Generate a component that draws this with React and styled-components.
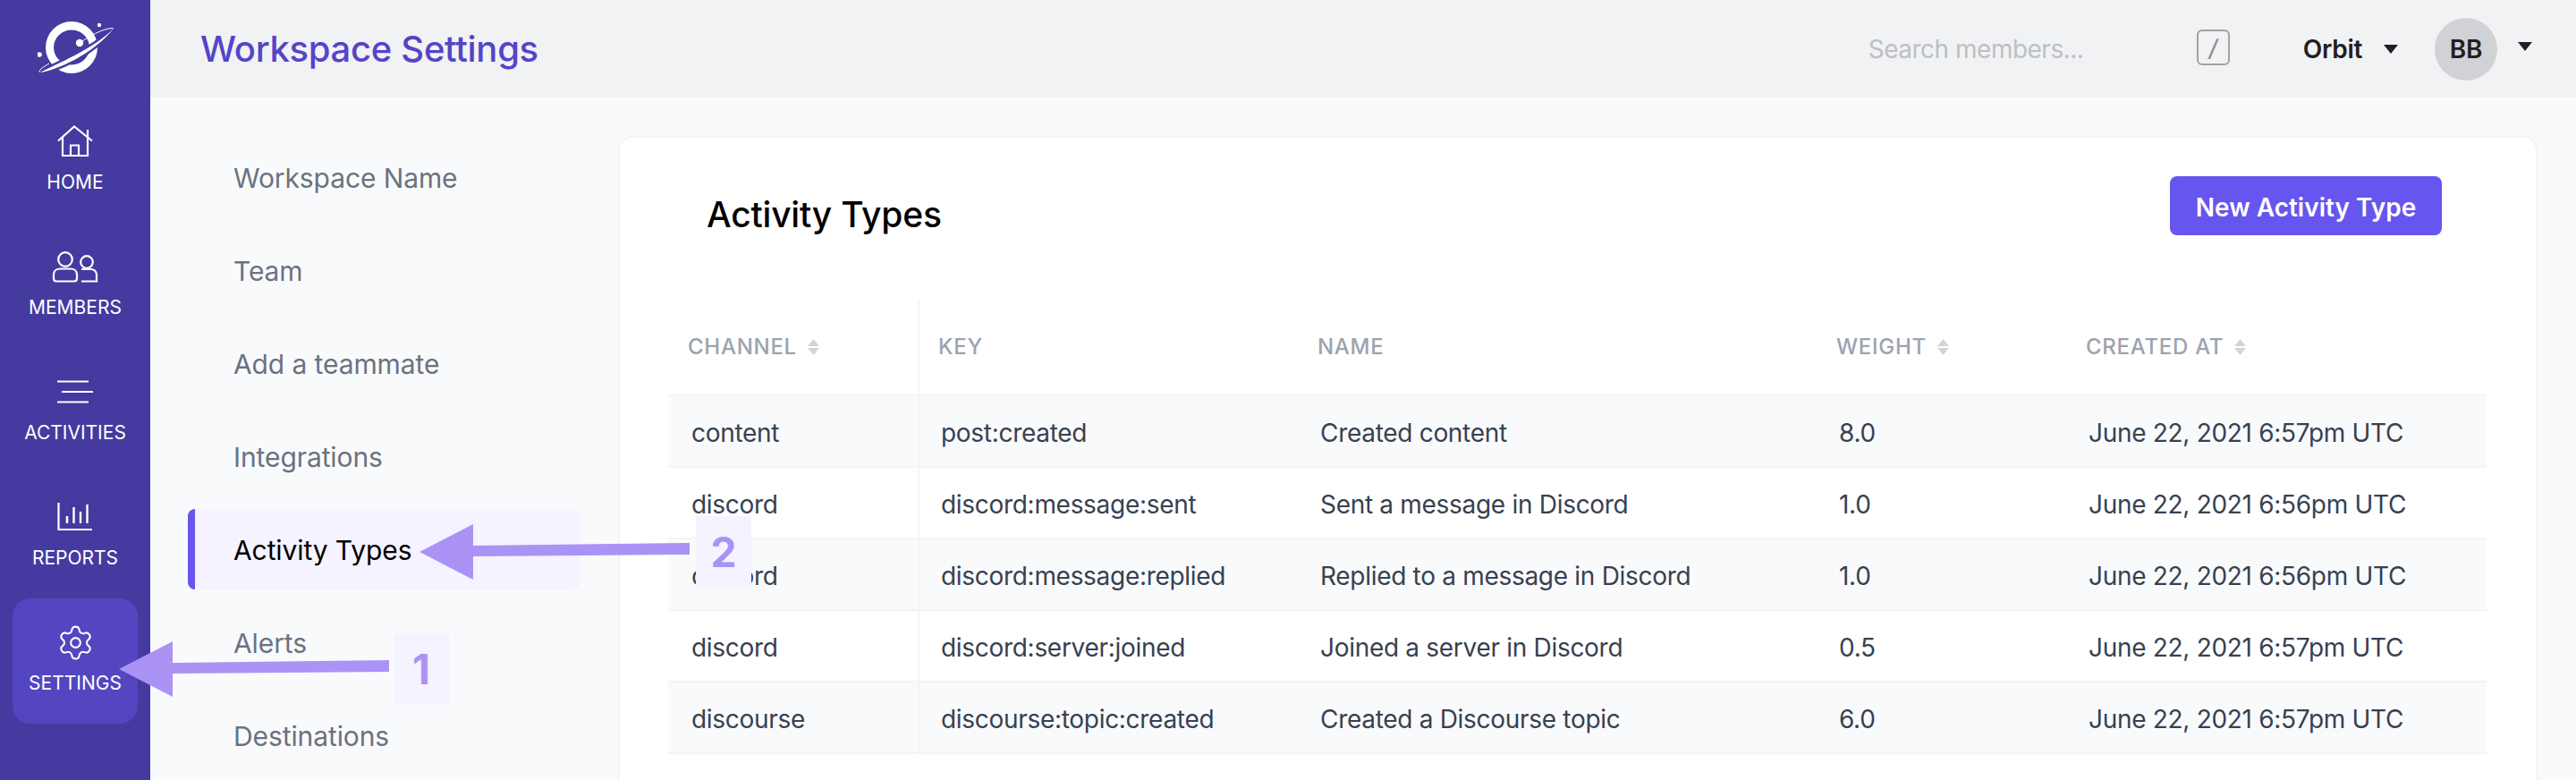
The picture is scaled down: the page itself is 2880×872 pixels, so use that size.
import React from "react";
import styled, { createGlobalStyle } from "styled-components";
import { Settings } from "lucide-react";

const rows = [
  ["content", "post:created", "Created content", "8.0", "June 22, 2021 6:57pm UTC"],
  ["discord", "discord:message:sent", "Sent a message in Discord", "1.0", "June 22, 2021 6:56pm UTC"],
  ["discord", "discord:message:replied", "Replied to a message in Discord", "1.0", "June 22, 2021 6:56pm UTC"],
  ["discord", "discord:server:joined", "Joined a server in Discord", "0.5", "June 22, 2021 6:57pm UTC"],
  ["discourse", "discourse:topic:created", "Created a Discourse topic", "6.0", "June 22, 2021 6:57pm UTC"],
];

const settingsLinks = [
  "Workspace Name",
  "Team",
  "Add a teammate",
  "Integrations",
  "Activity Types",
  "Alerts",
  "Destinations",
];

const HomeIcon = () => (
  <svg width="40" height="36" viewBox="0 0 40 36" fill="none" stroke="#fff" strokeWidth="2.2">
    <path d="M1 17.5 19 1.5 39 17.5" />
    <path d="M6 13v21h28V5" />
    <path d="M15 34V22.5h9V34" />
  </svg>
);

const MembersIcon = () => (
  <svg width="52" height="38" viewBox="0 0 52 38" fill="none" stroke="#fff" strokeWidth="2.2">
    <circle cx="15" cy="11" r="7.8" />
    <path d="M2 28c0-4 3-6.500 7-6.500h12c4 0 7 2.500 7 6.500v4c0 2-1 3.500-3 3.500H5c-2 0-3-1.500-3-3.500z" />
    <circle cx="39" cy="14" r="6.800" />
    <path d="M33 22h11c3 0 6 2.500 6 6v7.500H33" />
  </svg>
);

const ActivitiesIcon = () => (
  <svg width="40" height="26" viewBox="0 0 40 26" fill="none" stroke="#fff" strokeWidth="2.2">
    <path d="M0 1.500h35M5 13h35M0 24.500h35" />
  </svg>
);

const ReportsIcon = () => (
  <svg width="40" height="32" viewBox="0 0 40 32" fill="none" stroke="#fff" strokeWidth="2.2">
    <path d="M1.500 0v30H39" />
    <path d="M11 15v8M18.500 5v18M26 10v13M33.500 2v21" strokeWidth="2.400" />
  </svg>
);

const OrbitLogo = () => (
  <svg width="90" height="70" viewBox="0 0 90 70" fill="none">
    <path
      fillRule="evenodd"
      fill="#fff"
      d="M38 0a29 29 0 1 0 0 58 29 29 0 0 0 0-58zm0 9.500a20 19.500 0 1 1 0 39 20 19.500 0 0 1 0-39z"
    />
    <circle cx="47" cy="24" r="4.200" fill="#fff" />
    <circle cx="2" cy="37" r="2.800" fill="#fff" />
    <circle cx="69" cy="4" r="2.200" fill="#fff" />
    <path d="M3 57C20 55 62 37 85 8 62 31 22 47 3 57z" fill="#453a9f" stroke="#453a9f" strokeWidth="5" />
    <path d="M3 57C20 55 62 37 85 8 62 31 22 47 3 57z" fill="#fff" />
    <path d="M85 8C78 6 62 14 50 22" stroke="#fff" strokeWidth="1" />
    <path d="M3 57C0 55 6 51 13 47" stroke="#fff" strokeWidth="1" />
  </svg>
);

const SortIcon = () => (
  <SortSvg width="13" height="18" viewBox="0 0 13 18">
    <path d="M6.500 0 13 8H0z" />
    <path d="M6.500 18 13 10H0z" />
  </SortSvg>
);

const sideItems = [
  { label: "HOME", icon: <HomeIcon /> },
  { label: "MEMBERS", icon: <MembersIcon /> },
  { label: "ACTIVITIES", icon: <ActivitiesIcon /> },
  { label: "REPORTS", icon: <ReportsIcon /> },
  { label: "SETTINGS", icon: <Settings size={43} strokeWidth={1.15} color="#fff" />, active: true },
];

const Arrow = ({ left, top, length }) => (
  <ArrowSvg $left={left} $top={top} width={length} height="62" viewBox={`0 0 ${length} 62`}>
    <path d={`M0 31 60 0v24L${length} 21v13L60 36v26z`} />
  </ArrowSvg>
);

const App = () => {
  return (
    <Page>
      <GlobalStyle />
      <SideBar>
        <LogoWrapper>
          <OrbitLogo />
        </LogoWrapper>
        {sideItems.map((item) => (
          <SideItem key={item.label} $active={item.active}>
            <SideIcon>{item.icon}</SideIcon>
            <SideLabel>{item.label}</SideLabel>
          </SideItem>
        ))}
      </SideBar>
      <Main>
        <Header>
          <PageTitle>Workspace Settings</PageTitle>
          <SearchInput placeholder="Search members..." readOnly />
          <SlashKey>/</SlashKey>
          <WorkspaceName>Orbit</WorkspaceName>
          <Caret $gap="24px" />
          <Avatar>BB</Avatar>
          <Caret $gap="23px" $raise="5px" />
        </Header>
        <Content>
          <SettingsNav>
            {settingsLinks.map((link) => (
              <SettingsLink key={link} $active={link === "Activity Types"}>
                {link}
              </SettingsLink>
            ))}
          </SettingsNav>
          <Card>
            <CardHeader>
              <CardTitle>Activity Types</CardTitle>
              <PrimaryButton>New Activity Type</PrimaryButton>
            </CardHeader>
            <Table>
              <colgroup>
                <col width="281" />
                <col width="424" />
                <col width="580" />
                <col width="279" />
                <col width="469" />
              </colgroup>
              <thead>
                <tr>
                  <Th>CHANNEL <SortIcon /></Th>
                  <Th>KEY</Th>
                  <Th>NAME</Th>
                  <Th>WEIGHT <SortIcon /></Th>
                  <Th>CREATED AT <SortIcon /></Th>
                </tr>
              </thead>
              <tbody>
                {rows.map((row) => (
                  <Tr key={row[1]}>
                    {row.map((cell, i) => (
                      <Td key={i}>{cell}</Td>
                    ))}
                  </Tr>
                ))}
              </tbody>
            </Table>
          </Card>
        </Content>
      </Main>
      <Arrow left={133} top={717} length={302} />
      <StepBadge $left={440} $top={708}>1</StepBadge>
      <Arrow left={469} top={586} length={302} />
      <StepBadge $left={778} $top={577}>2</StepBadge>
    </Page>
  );
};

export default App;

const GlobalStyle = createGlobalStyle`
  html, body {
    margin: 0;
    padding: 0;
    background: #f9fafc;
    font-family: Inter, "Liberation Sans", sans-serif;
  }
  * {
    box-sizing: border-box;
  }
`;

const Page = styled.div`
  position: relative;
  display: flex;
  width: 100vw;
  height: 100vh;
  overflow: hidden;
`;

const SideBar = styled.nav`
  flex: 0 0 168px;
  display: flex;
  flex-direction: column;
  align-items: center;
  background: #453a9f;
`;

const LogoWrapper = styled.div`
  height: 109px;
  width: 100%;
  padding: 24px 0 0 42px;
`;

const SideItem = styled.div`
  width: 140px;
  height: 140px;
  flex: none;
  border-radius: 20px;
  padding-top: 27px;
  display: flex;
  flex-direction: column;
  align-items: center;
  color: #fff;
  background: ${(p) => (p.$active ? "#5346c0" : "transparent")};
`;

const SideIcon = styled.div`
  height: 44px;
  display: flex;
  align-items: center;
  justify-content: center;
`;

const SideLabel = styled.div`
  margin-top: 10px;
  font-size: 21px;
  line-height: 28px;
`;

const Main = styled.div`
  flex: 1;
  min-width: 0;
  display: flex;
  flex-direction: column;
`;

const Header = styled.header`
  flex: 0 0 109px;
  display: flex;
  align-items: center;
  padding: 0 49px 0 56px;
  background: #f1f2f4;
`;

const PageTitle = styled.h1`
  margin: 0;
  font-size: 40px;
  font-weight: 500;
  letter-spacing: -0.3px;
  color: #5544c9;
`;

const SearchInput = styled.input`
  margin-left: auto;
  width: 367px;
  border: 0;
  outline: 0;
  padding: 0;
  background: transparent;
  font-family: inherit;
  font-size: 28px;
  letter-spacing: -0.5px;

  &::placeholder {
    color: #bdbfc4;
  }
`;

const SlashKey = styled.div`
  width: 37px;
  height: 40px;
  display: flex;
  align-items: center;
  justify-content: center;
  border: 2px solid #a3a3a5;
  border-radius: 6px;
  color: #8f8f92;
  font-size: 26px;
  font-weight: 500;
  font-style: italic;
  margin-bottom: 3px;
`;

const WorkspaceName = styled.div`
  margin-left: 82px;
  font-size: 28px;
  font-weight: 600;
  letter-spacing: -0.3px;
  color: #1f2023;
`;

const Caret = styled.span`
  flex: none;
  width: 0;
  height: 0;
  margin-left: ${(p) => p.$gap};
  margin-bottom: ${(p) => p.$raise || "0"};
  border-left: 8.5px solid transparent;
  border-right: 8.5px solid transparent;
  border-top: 10px solid #1f2023;
`;

const Avatar = styled.div`
  flex: none;
  width: 70px;
  height: 70px;
  margin-left: 41px;
  border-radius: 50%;
  display: flex;
  align-items: center;
  justify-content: center;
  background: #d1d2d5;
  color: #1f2023;
  font-size: 28px;
  font-weight: 600;
  letter-spacing: -0.3px;
`;

const Content = styled.div`
  flex: 1;
  min-height: 0;
  display: flex;
`;

const SettingsNav = styled.aside`
  flex: 0 0 523px;
  display: flex;
  flex-direction: column;
  gap: 14px;
  padding: 44px 43px 0 42px;
`;

const SettingsLink = styled.div`
  flex: none;
  height: 90px;
  display: flex;
  align-items: center;
  padding-top: 1px;
  padding-left: ${(p) => (p.$active ? "43px" : "51px")};
  border-left: ${(p) => (p.$active ? "8px solid #6655ee" : "0")};
  border-radius: 8px;
  background: ${(p) => (p.$active ? "#f5f3ff" : "transparent")};
  color: ${(p) => (p.$active ? "#000" : "#6b7280")};
  font-size: 30px;
  letter-spacing: -0.1px;
`;

const Card = styled.section`
  flex: 1;
  min-width: 0;
  margin: 43px 43px 0 0;
  border: 2px solid #f3f4f6;
  border-bottom: 0;
  border-radius: 16px 16px 0 0;
  background: #fff;
`;

const CardHeader = styled.div`
  height: 181px;
  display: flex;
  justify-content: space-between;
  align-items: flex-start;
  padding: 43px 105px 0 97px;
`;

const CardTitle = styled.h2`
  margin: 17px 0 0;
  font-size: 39px;
  line-height: 52px;
  font-weight: 500;
  letter-spacing: -0.2px;
  color: #000;
`;

const PrimaryButton = styled.button`
  width: 304px;
  height: 66px;
  border: 0;
  border-radius: 8px;
  padding: 3px 0 0;
  background: #6655ee;
  color: #fff;
  font-family: inherit;
  font-size: 28px;
  font-weight: 600;
`;

const Table = styled.table`
  table-layout: fixed;
  width: 2033px;
  margin-left: 54px;
  border-collapse: separate;
  border-spacing: 0;
`;

const Th = styled.th`
  height: 108px;
  padding: 0 0 2px 21px;
  text-align: left;
  vertical-align: middle;
  border-bottom: 2px solid #f3f4f6;
  color: #9ca3af;
  font-size: 24px;
  font-weight: 500;
  letter-spacing: 0.03em;

  &:first-child {
    padding-left: 22px;
    border-right: 2px solid #f3f4f6;
  }
`;

const SortSvg = styled.svg`
  margin-left: 5px;
  vertical-align: -1px;
  fill: #d1d5db;
`;

const Tr = styled.tr`
  &:nth-child(odd) {
    background: #f9fafb;
  }
`;

const Td = styled.td`
  height: 80px;
  padding: 3px 0 0 24px;
  border-bottom: 2px solid #f3f4f6;
  color: #374151;
  font-size: 28px;
  letter-spacing: -0.3px;
  white-space: nowrap;

  &:first-child {
    border-right: 2px solid #f3f4f6;
    padding-left: 26px;
  }
`;

const ArrowSvg = styled.svg`
  position: absolute;
  left: ${(p) => p.$left}px;
  top: ${(p) => p.$top}px;
  fill: #ab92f5;
`;

const StepBadge = styled.div`
  position: absolute;
  left: ${(p) => p.$left}px;
  top: ${(p) => p.$top}px;
  width: 62px;
  height: 80px;
  display: flex;
  align-items: center;
  justify-content: center;
  background: #f5f3ff;
  color: #ab92f5;
  font-size: 46px;
  font-weight: 700;
`;
